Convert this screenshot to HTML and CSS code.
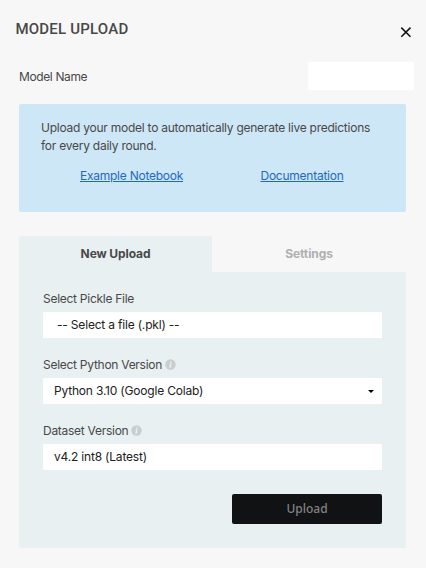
FILE: index.html
```html
<!DOCTYPE html>
<html lang="en">
<head>
<meta charset="utf-8">
<title>Model Upload</title>
<link rel="stylesheet" href="styles.css">
</head>
<body>
<main class="dialog">
  <header class="header">
    <h1 class="title">MODEL UPLOAD</h1>
    <button class="close" aria-label="Close"><svg width="12" height="12" viewBox="0 0 12 12"><path d="M1.3 1.6 10.5 10.8M10.5 1.6 1.3 10.8"/></svg></button>
  </header>
  <div class="name-row">
    <label for="name">Model Name</label>
    <input id="name" class="name-input" type="text">
  </div>
  <section class="notice">
    <p class="notice-text">Upload your model to automatically generate live predictions for every daily round.</p>
    <div class="links"><a class="example" href="#">Example Notebook</a><a class="docs" href="#">Documentation</a></div>
  </section>
  <nav class="tabs">
    <div class="tab active">New Upload</div>
    <div class="tab">Settings</div>
  </nav>
  <section class="panel">
    <div class="label">Select Pickle File</div>
    <div class="field file">-- Select a file (.pkl) --</div>
    <div class="label"><span>Select Python Version</span><svg class="info" width="11" height="11" viewBox="0 0 11 11"><circle cx="5.5" cy="5.5" r="5.2"/><path d="M4.5 4.6h1.9l-.5 3h.5v.8H4.2v-.8h.5l.3-2.2h-.5zM5.1 2.4h1.4v1.3H5.1z"/></svg></div>
    <div class="field select"><span>Python 3.10 (Google Colab)</span><svg width="6" height="3" viewBox="0 0 6 3"><path d="M0 0h6L3 3z"/></svg></div>
    <div class="label"><span>Dataset Version</span><svg class="info" width="11" height="11" viewBox="0 0 11 11"><circle cx="5.5" cy="5.5" r="5.2"/><path d="M4.5 4.6h1.9l-.5 3h.5v.8H4.2v-.8h.5l.3-2.2h-.5zM5.1 2.4h1.4v1.3H5.1z"/></svg></div>
    <div class="field">v4.2 int8 (Latest)</div>
    <button class="upload">Upload</button>
  </section>
</main>
</body>
</html>
```
FILE: styles.css
```css
* { box-sizing: border-box; }
body {
  margin: 0;
  background: #f7f7f7;
  color: #484848;
  font: 12px/18px Inter, sans-serif;
  letter-spacing: -0.25px;
}
.dialog { height: 568px; padding: 19px 20px 20px 19px; }
.header { display: flex; justify-content: space-between; height: 43px; margin: 0 -5.5px 0 -3.5px; }
.title { margin: 0; font: 500 15px/20px Roboto, sans-serif; letter-spacing: 0.2px; }
.close { width: 12px; height: 12px; margin: 7px 0 0; padding: 0; border: 0; background: none; }
.close svg { display: block; fill: none; stroke: #111; stroke-width: 1.5; }
.name-row { display: flex; align-items: center; justify-content: space-between; height: 28px; margin-right: -8px; }
.name-row label { padding-top: 1px; letter-spacing: -0.38px; }
.name-input { width: 106px; height: 28px; border: 0; background: #fff; }
.notice { height: 108px; margin-top: 14px; padding: 15px 22px; border-radius: 2px; background: #cde7f6; }
.notice-text { margin: 0; letter-spacing: -0.245px; }
.links { display: flex; margin-top: 12px; padding-left: 39px; }
.links a { color: #1d68c9; text-decoration-thickness: 1px; text-underline-offset: 1px; }
.docs { margin-left: 77.5px; }
.tabs { display: grid; grid-template-columns: 193px 194px; height: 36px; margin-top: 24px; text-align: center; font-weight: 700; line-height: 36px; letter-spacing: -0.1px; color: #b0b0b0; }
.active { border-radius: 2px 2px 0 0; background: #e8f0f2; color: #484848; }
.panel { height: 276px; padding: 18px 24px; border-radius: 0 2px 2px 2px; background: #e8f0f2; }
.label { display: flex; align-items: center; height: 18px; margin-bottom: 4px; letter-spacing: -0.27px; }
.info { margin: -1px 0 0 3px; fill: #c9cdcf; }
.info path { fill: #eef3f5; }
.field { height: 26px; margin-bottom: 18px; padding: 0 11px; border-radius: 1px; background: #fff; color: #202020; line-height: 26px; letter-spacing: -0.19px; }
.file { padding-left: 14px; }
.select { display: flex; align-items: center; justify-content: space-between; padding-right: 8px; }
.select svg { fill: #000; }
.upload { display: block; width: 150px; height: 30px; margin: 24px 0 0 auto; padding: 0; border: 0; border-radius: 2px; background: #111214; color: #828282; font: 500 12px/30px "Noto Sans", sans-serif; }
```
